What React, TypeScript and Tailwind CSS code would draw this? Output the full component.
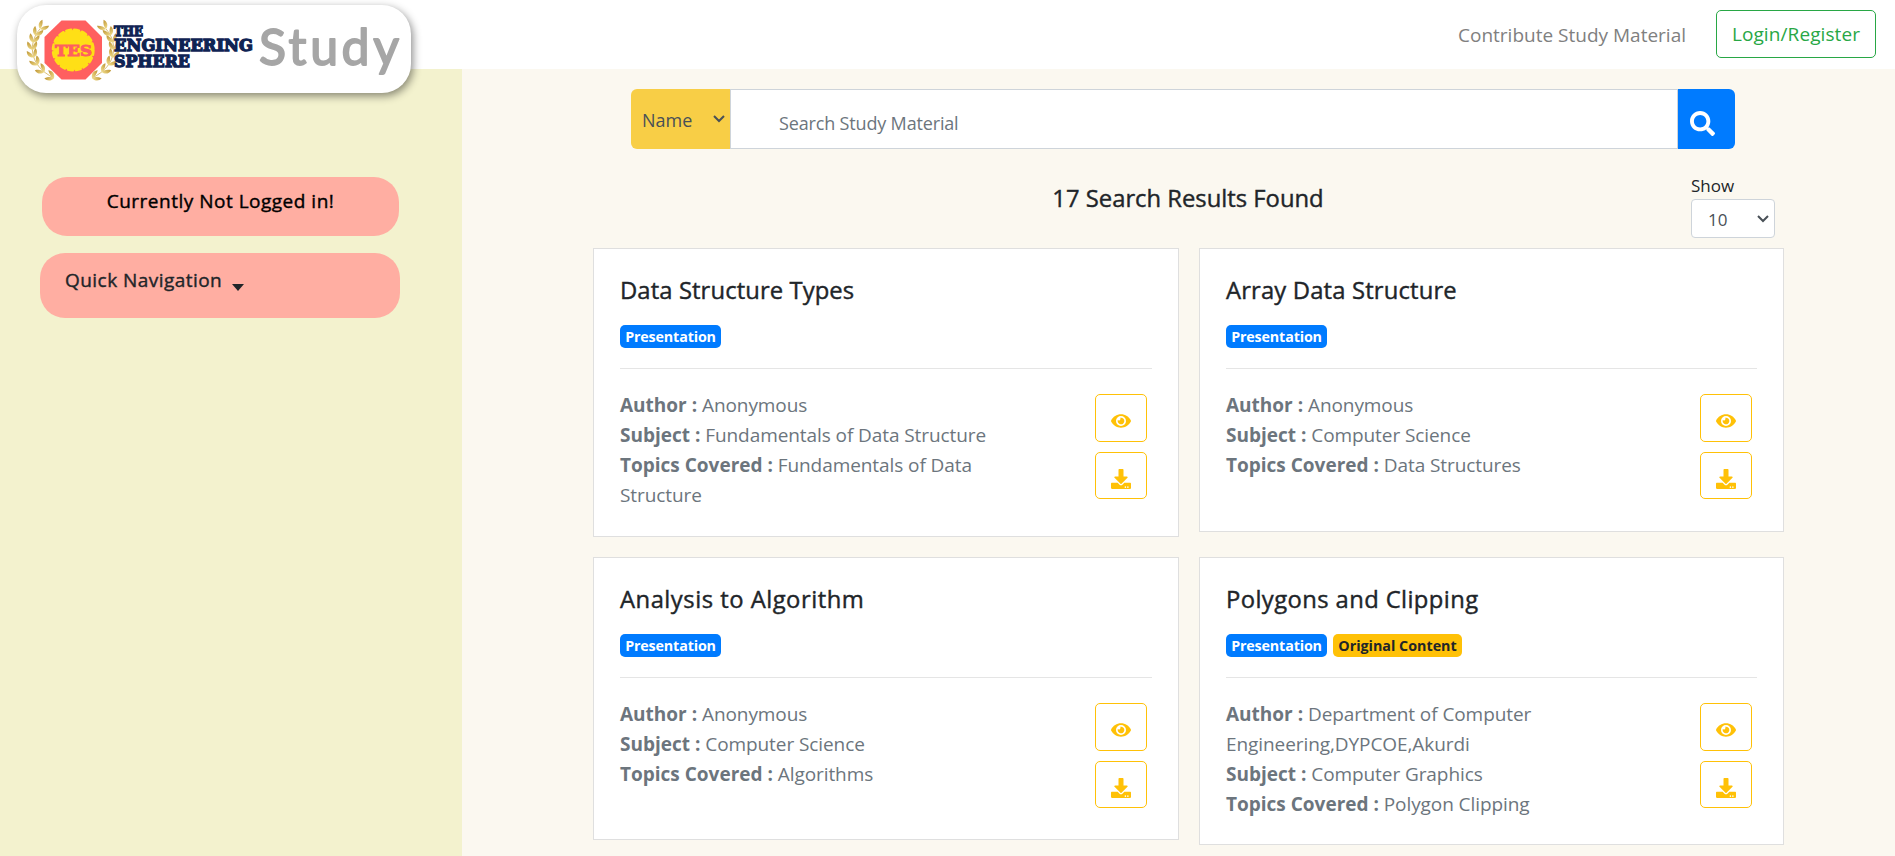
import type { ReactNode } from "react";

const SANS = "font-['Open_Sans','Noto_Sans',sans-serif]";

type Material = {
  title: string;
  tracking: string;
  original?: boolean;
  author: string;
  subject: string;
  topics: string;
  height: string;
};

const materials: Material[] = [
  { title: "Data Structure Types", tracking: "tracking-[0.1px]", author: "Anonymous", subject: "Fundamentals of Data Structure", topics: "Fundamentals of Data Structure", height: "h-[289px]" },
  { title: "Array Data Structure", tracking: "tracking-[0.16px]", author: "Anonymous", subject: "Computer Science", topics: "Data Structures", height: "h-[284px]" },
  { title: "Analysis to Algorithm", tracking: "tracking-[0.5px]", author: "Anonymous", subject: "Computer Science", topics: "Algorithms", height: "h-[283px]" },
  { title: "Polygons and Clipping", tracking: "tracking-[0.4px]", original: true, author: "Department of Computer Engineering,DYPCOE,Akurdi", subject: "Computer Graphics", topics: "Polygon Clipping", height: "h-[288px]" },
];

function Chevron({ className }: { className: string }) {
  return (
    <svg viewBox="0 0 12 8" className={className} fill="none" stroke="currentColor" strokeWidth="2">
      <path d="M1 1l5 5 5-5" />
    </svg>
  );
}

function EyeIcon() {
  return (
    <svg viewBox="0 0 576 512" className="h-[18px] w-5" fill="currentColor">
      <path d="M572.52 241.4C518.29 135.59 410.93 64 288 64S57.68 135.64 3.48 241.41a32.35 32.35 0 0 0 0 29.19C57.71 376.41 165.07 448 288 448s230.32-71.64 284.52-177.41a32.35 32.35 0 0 0 0-29.19zM288 400a144 144 0 1 1 144-144 143.93 143.93 0 0 1-144 144zm0-240a95.31 95.31 0 0 0-25.31 3.79 47.85 47.85 0 0 1-66.9 66.9A95.78 95.78 0 1 0 288 160z" />
    </svg>
  );
}

function DownloadIcon() {
  return (
    <svg viewBox="0 0 512 512" className="h-5 w-5" fill="currentColor">
      <path d="M216 0h80c13.3 0 24 10.7 24 24v168h87.7c17.8 0 26.7 21.5 14.1 34.1L269.7 378.3c-7.5 7.5-19.8 7.5-27.3 0L90.1 226.1c-12.6-12.6-3.7-34.1 14.1-34.1H192V24c0-13.3 10.7-24 24-24zm296 376v112c0 13.3-10.7 24-24 24H24c-13.3 0-24-10.7-24-24V376c0-13.3 10.7-24 24-24h146.7l49 49c20.1 20.1 52.5 20.1 72.6 0l49-49H488c13.3 0 24 10.7 24 24zm-124 88c0-11-9-20-20-20s-20 9-20 20 9 20 20 20 20-9 20-20zm64 0c0-11-9-20-20-20s-20 9-20 20 9 20 20 20 20-9 20-20z" />
    </svg>
  );
}

function SearchIcon() {
  return (
    <svg viewBox="0 0 512 512" className="h-[25px] w-[25px]" fill="currentColor">
      <path d="M505 442.7L405.3 343c-4.500-4.500-10.600-7-17-7H372c27.600-35.300 44-79.700 44-128C416 93.100 322.900 0 208 0S0 93.100 0 208s93.100 208 208 208c48.300 0 92.700-16.400 128-44v16.300c0 6.400 2.500 12.500 7 17l99.700 99.700c9.400 9.400 24.600 9.400 33.900 0l28.300-28.300c9.400-9.400 9.400-24.600.1-34zM208 336c-70.700 0-128-57.200-128-128 0-70.700 57.200-128 128-128 70.700 0 128 57.200 128 128 0 70.700-57.200 128-128 128z" />
    </svg>
  );
}

// Pairs of leaves placed along the laurel's curved stem.
const STEM = [[37, 73], [10, 60], [12, 36], [23, 24]];
const leaves = [0, 0.14, 0.28, 0.42, 0.56, 0.7, 0.84, 1].map((t) => {
  const u = 1 - t;
  const at = (k: number) => u * u * u * STEM[0][k] + 3 * u * u * t * STEM[1][k] + 3 * u * t * t * STEM[2][k] + t * t * t * STEM[3][k];
  const slope = (k: number) =>
    3 * u * u * (STEM[1][k] - STEM[0][k]) + 6 * u * t * (STEM[2][k] - STEM[1][k]) + 3 * t * t * (STEM[3][k] - STEM[2][k]);
  return { x: at(0), y: at(1), deg: (Math.atan2(slope(1), slope(0)) * 180) / Math.PI + 90 };
});

function Laurel() {
  return (
    <g>
      <path d="M37 73C10 60 12 36 23 24" fill="none" stroke="#d0b050" strokeWidth="0.8" />
      {leaves.map((l, i) => (
        <g key={i} transform={`translate(${l.x.toFixed(1)} ${l.y.toFixed(1)}) rotate(${l.deg.toFixed(1)})`}>
          <path d="M0 0C-4.500-1-6-5-4.500-8.500C-1.500-6 0-3.500 0 0z" fill="url(#gold)" />
          <path d="M0 0C4.500-1 6-5 4.500-8.500C1.500-6 0-3.500 0 0z" fill="url(#gold)" />
        </g>
      ))}
    </g>
  );
}

function Logo() {
  return (
    <svg viewBox="0 0 394 88" className="h-[88px] w-[394px]">
      <defs>
        <linearGradient id="gold" x1="0" y1="0" x2="0" y2="1">
          <stop offset="0" stopColor="#bd9433" />
          <stop offset="1" stopColor="#f0dc8a" />
        </linearGradient>
      </defs>
      <path d="M44.500 15.500h24L85 32v26L68.500 74.500h-24L27.500 58V32z" fill="#ff5f5f" />
      <circle cx="56.200" cy="45" r="20" fill="#ffdf16" />
      <circle cx="56.200" cy="45" r="20.300" fill="none" stroke="#ffdf16" strokeWidth="2.400" strokeLinecap="round" strokeDasharray="5 3" />
      <Laurel />
      <g transform="translate(112 0) scale(-1 1)">
        <Laurel />
      </g>
      <g fontFamily="DejaVu Serif" fontWeight="700">
        <text x="38" y="50.500" fontSize="15.500" textLength="37" lengthAdjust="spacingAndGlyphs" fill="#ff5f5f" stroke="#ff5f5f" strokeWidth="1">TES</text>
        <g fill="#0f2353" stroke="#0f2353" strokeWidth="1.300">
          <text x="97" y="30.500" fontSize="13.200" textLength="29" lengthAdjust="spacingAndGlyphs">THE</text>
          <text x="97" y="45.700" fontSize="16.500" textLength="139" lengthAdjust="spacingAndGlyphs">ENGINEERING</text>
          <text x="97" y="62" fontSize="16.800" textLength="76" lengthAdjust="spacingAndGlyphs">SPHERE</text>
        </g>
      </g>
      <text x="242" y="60" fontFamily="Lato" fontWeight="400" fontSize="50" textLength="140" lengthAdjust="spacing" fill="#a6a6a6" stroke="#a6a6a6" strokeWidth="1.800" strokeLinejoin="round">Study</text>
    </svg>
  );
}

function Field({ label, children }: { label: string; children: ReactNode }) {
  return (
    <p>
      <b className="font-bold tracking-normal">{label} :</b> {children}
    </p>
  );
}

function Card({ m }: { m: Material }) {
  return (
    <article className={`${m.height} border border-[#dfdfdf] bg-white px-[26px] pt-[26px]`}>
      <h5 className={`${m.tracking} h-[30px] text-[23.8px] leading-[30px] text-[#212529] [-webkit-text-stroke:0.4px_#212529]`}>{m.title}</h5>
      <div className="mt-[20px] flex h-[23px] gap-[6px] text-[14.300px] leading-[23px] font-bold tracking-[-0.15px]">
        <span className="w-[101px] rounded-[5px] bg-[#007bff] text-center text-white">Presentation</span>
        {m.original && <span className="w-[129px] rounded-[5px] bg-[#ffc107] text-center tracking-normal text-[#212529]">Original Content</span>}
      </div>
      <hr className="mt-[20px] border-t border-[#e5e5e5]" />
      <div className="mt-[21px] flex justify-between">
        <div className="w-[372px] text-[19px] leading-[30px] tracking-[-0.08px] text-[#6c757d]">
          <Field label="Author">{m.author}</Field>
          <Field label="Subject">{m.subject}</Field>
          <Field label="Topics Covered">{m.topics}</Field>
        </div>
        <div className="mt-1 mr-[5px] flex flex-col gap-[10px] text-[#ffc107]">
          <button className="flex h-12 w-[52px] justify-center rounded-[5px] border border-[#ffc107] pt-[17px]"><EyeIcon /></button>
          <button className="flex h-[47px] w-[52px] justify-center rounded-[5px] border border-[#ffc107] pt-4"><DownloadIcon /></button>
        </div>
      </div>
    </article>
  );
}

export default function App() {
  return (
    <div className={`${SANS} relative flex h-[856px] w-[1895px] flex-col overflow-hidden bg-[#fbf8f0]`}>
      <header className="flex h-[69px] shrink-0 items-start justify-end bg-white pt-[10px] pr-[19px]">
        <a className="mr-[30px] text-[19px] leading-[50px] text-[#808080]">Contribute Study Material</a>
        <button className="h-12 w-[160px] rounded-[5px] border border-[#28a745] pt-px text-[19px] tracking-[0.1px] text-[#28a745]">Login/Register</button>
      </header>
      <div className="absolute top-[5px] left-[17px] h-[88px] w-[394px] rounded-[29px] bg-white shadow-[2px_3px_8px_rgba(0,0,0,0.45)]">
        <Logo />
      </div>
      <div className="flex flex-1">
        <aside className="w-[462px] shrink-0 bg-[#f3f2ce] pt-[108px] pl-10">
          <div className="ml-[2px] h-[59px] w-[357px] rounded-[25px] bg-[#ffaea2] pt-[9px] text-center text-[19px] leading-[30px] tracking-[0.5px] text-black [-webkit-text-stroke:0.4px_#000]">
            Currently Not Logged in!
          </div>
          <div className="mt-[17px] flex h-[65px] w-[360px] rounded-[25px] bg-[#ffaea2] pt-[12px] pl-[25px] text-[19px] leading-[30px] tracking-[0.45px] text-[#212529] [-webkit-text-stroke:0.4px_#212529]">
            Quick Navigation
            <svg viewBox="0 0 12 7" className="mt-[19px] ml-[10px] h-[7px] w-3" fill="currentColor"><path d="M0 0h12L6 7z" /></svg>
          </div>
        </aside>
        <main className="flex flex-1 flex-col pt-5">
          <div className="ml-[169px] flex h-[60px] w-[1104px]">
            <div className="flex w-[99px] items-center rounded-l-[6px] bg-[#f8ce46] pl-[11px] text-[18px] text-[#495057]">
              <span className="-mt-px w-[71px] pt-1">Name</span>
              <Chevron className="h-2 w-3" />
            </div>
            <div className="w-[948px] border border-[#ced4da] bg-white pt-[2px] pl-12 text-[18px] leading-[62px] tracking-[-0.16px] text-[#6c757d]">Search Study Material</div>
            <button className="w-[57px] rounded-r-[6px] bg-[#007bff] pt-[8px] pl-3 text-white"><SearchIcon /></button>
          </div>
          <div className="ml-[131px] flex h-[99px] w-[1191px] justify-center">
            <h4 className="mt-[32px] ml-[92px] flex-1 text-center text-[23.800px] leading-[34px] text-[#212529] [-webkit-text-stroke:0.4px_#212529]">17 Search Results Found</h4>
            <div className="mt-[26px] mr-[9px] flex w-[84px] flex-col text-[17px]">
              <span className="h-6 leading-[22px] text-[#212529]">Show</span>
              <div className="flex h-[39px] items-center rounded border border-[#ced4da] bg-white pl-[16px] text-[#495057]">
                <span className="w-[49px] pt-[2px]">10</span>
                <Chevron className="h-2 w-3" />
              </div>
            </div>
          </div>
          <div className="ml-[131px] grid w-[1191px] grid-cols-[586px_585px] items-start gap-x-[20px] gap-y-[20px]">
            {materials.map((m) => (
              <Card key={m.title} m={m} />
            ))}
          </div>
        </main>
      </div>
    </div>
  );
}
